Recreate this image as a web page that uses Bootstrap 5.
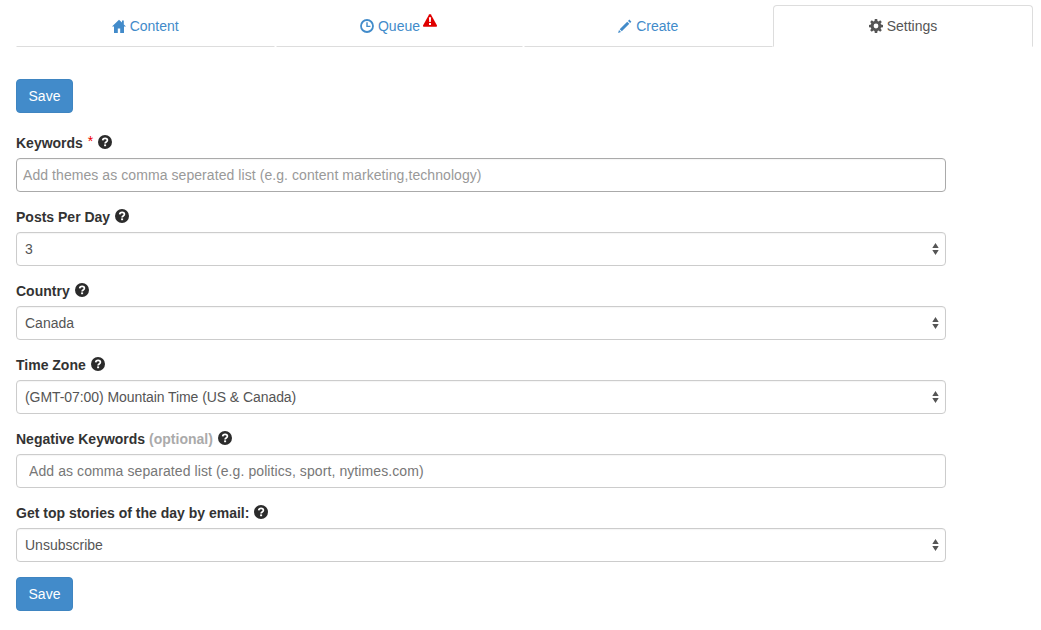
<!DOCTYPE html>
<html lang="en">
<head>
<meta charset="utf-8">
<title>Settings</title>
<link href="https://cdn.jsdelivr.net/npm/bootstrap@5.3.0/dist/css/bootstrap.min.css" rel="stylesheet">
<style>
body{font-family:"Liberation Sans",Arial,sans-serif;font-size:14px;line-height:20px;color:#333;background:#fff}
.page-wrap{padding:5px 8px 0 16px}
.tab-bar{border-bottom:0;flex-wrap:nowrap}
.tab-bar .nav-item:nth-child(1){width:258.5px}
.tab-bar .nav-item:nth-child(2){width:248px}
.tab-bar .nav-item:nth-child(3){width:250.5px}
.tab-bar .nav-item:nth-child(4){width:260px}
.tab-bar .nav-link{height:42px;padding:10px 15px;margin:0;color:#428bca;text-align:center;border:1px solid transparent;border-bottom-color:#ddd;border-radius:4px 4px 0 0;background:#fff;white-space:nowrap}
.tab-bar .nav-item:nth-child(2) .nav-link,.tab-bar .nav-item:nth-child(3) .nav-link{margin-left:1px}
.tab-bar .nav-link.active{color:#555;border-color:#ddd #ddd #fff}
.ico{display:inline-block;vertical-align:-2px;fill:currentColor}
.alert-ico{vertical-align:4px;margin-top:-8px;margin-left:-1px;margin-right:1px}
.settings-form{width:930px;padding-top:32px}
.save-btn{width:57px;height:34px;padding:6px 0;font-size:14px;line-height:20px;background:#428bca;border:1px solid #3f85c1;border-radius:4px;color:#fff}
.save-btn:hover{background:#428bca}
.field{margin-bottom:15px}
.first-field{margin-top:20px}
.field-label{display:block;font-weight:700;margin-bottom:5px;color:#333;height:20px}
.req{color:#e00;font-weight:400;vertical-align:top;font-size:14px;line-height:16px;margin-left:1px}
.opt{color:#aaa}
.q-ico{vertical-align:-1px;margin-left:1px;color:#2b2b2b}
.settings-form .form-control,.settings-form .form-select{height:34px;font-size:14px;line-height:20px;color:#555;border:1px solid #ccc;border-radius:4px;padding:6px 12px;box-shadow:inset 0 1px 1px rgba(0,0,0,.04)}
.settings-form .form-select{padding-left:8px;background-image:url("data:image/svg+xml,%3Csvg xmlns='http://www.w3.org/2000/svg' width='7' height='12'%3E%3Cpath fill='%23555' d='M3.500 0l3.200 5H.3zM3.500 12L.3 7h6.400z'/%3E%3C/svg%3E");background-size:7px 12px;background-position:right 6px center}
.settings-form .keyword-input{border-color:#aaa;padding-left:6px}
.form-control::placeholder{color:#999;opacity:1;letter-spacing:.07px}
.neg-input::placeholder{color:#777;letter-spacing:.09px}
.settings-form .tz-select{letter-spacing:-.07px}
</style>
</head>
<body>
<svg width="0" height="0" class="position-absolute">
<defs>
<symbol id="q" viewBox="0 0 14 14"><circle cx="7" cy="7" r="7" fill="currentColor"/><path d="M4.700 5.400C4.800 4 5.800 3.300 7.100 3.300c1.300 0 2.300.8 2.300 1.900 0 1.800-2.300 1.700-2.300 3.300" fill="none" stroke="#fff" stroke-width="1.700"/><rect x="6.100" y="9.400" width="2" height="1.800" fill="#fff"/></symbol>
</defs>
</svg>
<div class="page-wrap">
<ul class="nav nav-tabs tab-bar">
<li class="nav-item"><a class="nav-link" href="#"><svg class="ico" width="14" height="14" viewBox="0 0 14 14"><path d="M7 .8L0 7.600h2V14h3.800V9.400h2.400V14H12V7.600h2l-2.200-2.200V1.600H10v2z"/></svg> Content</a></li>
<li class="nav-item"><a class="nav-link" href="#"><svg class="ico" width="14" height="14" viewBox="0 0 14 14"><circle cx="7" cy="7" r="6" fill="none" stroke="currentColor" stroke-width="1.800"/><path d="M7 3.300V7.400H10.400" fill="none" stroke="currentColor" stroke-width="1.400"/></svg> Queue <svg class="ico alert-ico" width="14" height="13" viewBox="0 0 14 13"><path fill="#e00000" d="M7 0c.4 0 .7.200.9.500l6 10.800c.3.700-.1 1.500-.9 1.500H1c-.8 0-1.200-.8-.9-1.500L6.100.5C6.300.2 6.600 0 7 0z"/><path fill="#fff" d="M5.900 3.300h2.200L7.800 8H6.200zM6 9h2v2H6z"/></svg></a></li>
<li class="nav-item"><a class="nav-link" href="#"><svg class="ico" width="14" height="14" viewBox="0 0 14 14"><path d="M11.300.6l2.100 2.100-1.300 1.300L10 1.900zM9.200 2.700l2.100 2.100-7.500 7.500-2.100-2.100zM1 11l2 2-2.900.9z"/></svg> Create</a></li>
<li class="nav-item"><a class="nav-link active" aria-current="page" href="#"><svg class="ico" width="14" height="14" viewBox="0 0 14 14"><path fill-rule="evenodd" d="M5.800 0h2.400l.3 1.900 1.100.5L11.200 1.300 12.800 2.900 11.600 4.400l.5 1.200L14 5.900v2.300l-1.900.3-.5 1.100 1.200 1.600-1.600 1.600-1.600-1.200-1.100.5L8.200 14H5.800l-.3-1.900-1.100-.5-1.600 1.200L1.200 11.200l1.100-1.600-.4-1.100L0 8.200V5.900l1.900-.3.400-1.200L1.200 2.900 2.800 1.300 4.400 2.400l1.100-.5zM7 4.600a2.400 2.400 0 1 0 0 4.800 2.400 2.400 0 0 0 0-4.800z"/></svg> Settings</a></li>
</ul>
<form class="settings-form">
<button type="button" class="btn btn-primary save-btn d-block">Save</button>
<div class="field first-field">
<label class="field-label" for="kw">Keywords <span class="req">*</span> <svg class="ico q-ico" width="14" height="14"><use href="#q"/></svg></label>
<input id="kw" class="form-control keyword-input" type="text" placeholder="Add themes as comma seperated list (e.g. content marketing,technology)">
</div>
<div class="field">
<label class="field-label" for="ppd">Posts Per Day <svg class="ico q-ico" width="14" height="14"><use href="#q"/></svg></label>
<select id="ppd" class="form-select"><option>3</option></select>
</div>
<div class="field">
<label class="field-label" for="ct">Country <svg class="ico q-ico" width="14" height="14"><use href="#q"/></svg></label>
<select id="ct" class="form-select"><option>Canada</option></select>
</div>
<div class="field">
<label class="field-label" for="tz">Time Zone <svg class="ico q-ico" width="14" height="14"><use href="#q"/></svg></label>
<select id="tz" class="form-select tz-select"><option>(GMT-07:00) Mountain Time (US &amp; Canada)</option></select>
</div>
<div class="field">
<label class="field-label" for="nk">Negative Keywords <span class="opt">(optional)</span> <svg class="ico q-ico" width="14" height="14"><use href="#q"/></svg></label>
<input id="nk" class="form-control neg-input" type="text" placeholder="Add as comma separated list (e.g. politics, sport, nytimes.com)">
</div>
<div class="field">
<label class="field-label" for="em">Get top stories of the day by email: <svg class="ico q-ico" width="14" height="14"><use href="#q"/></svg></label>
<select id="em" class="form-select"><option>Unsubscribe</option></select>
</div>
<button type="button" class="btn btn-primary save-btn d-block">Save</button>
</form>
</div>
<script src="https://cdn.jsdelivr.net/npm/bootstrap@5.3.0/dist/js/bootstrap.bundle.min.js"></script>
</body>
</html>
